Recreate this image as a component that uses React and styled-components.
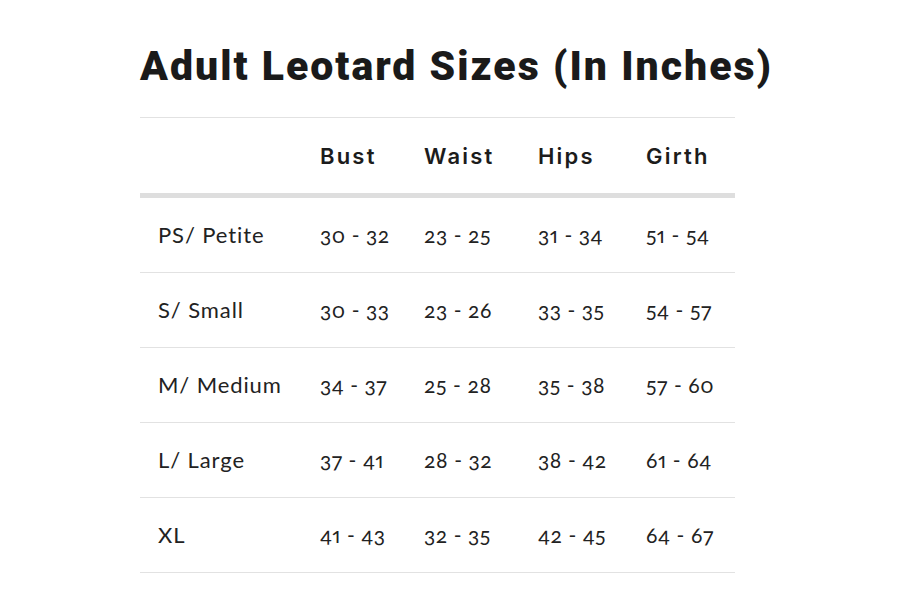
import React from 'react';
import styled, { createGlobalStyle } from 'styled-components';

const GlobalStyle = createGlobalStyle`
    body {
        margin: 0;
        background: #ffffff;
        color: #1c1c1c;
        font-family: Lato, "Open Sans", sans-serif;
    }
`;

const Page = styled.div`
    width: 898px;
    padding: 41px 0 0 140px;
    box-sizing: border-box;
`;

const Title = styled.h1`
    margin: 0 0 26px;
    font-family: Roboto, "Liberation Sans", sans-serif;
    font-size: 41px;
    font-weight: 900;
    line-height: 50px;
    letter-spacing: 2px;
    color: #1a1a1a;
`;

const Table = styled.table`
    width: 595px;
    table-layout: fixed;
    border-collapse: collapse;
    border-top: 1px solid #e2e2e2;
`;

const HeadCell = styled.th`
    width: ${p => p.$w - 18}px;
    height: 75px;
    padding: 0 0 0 18px;
    text-align: left;
    vertical-align: middle;
    font-family: Inter, "Open Sans", sans-serif;
    font-size: 22px;
    font-weight: 600;
    letter-spacing: 2.2px;
    color: #1c1c1c;
    border-bottom: 5px solid #dedede;
`;

const Row = styled.tr`
    border-bottom: 1px solid #e2e2e2;
`;

const Cell = styled.td`
    height: 72px;
    padding: 0 0 2px 18px;
    vertical-align: middle;
    font-family: Lato, "Open Sans", sans-serif;
    font-size: ${p => (p.$label ? '22px' : '21px')};
    letter-spacing: ${p => (p.$label ? '0.9px' : '0.6px')};
    color: #222222;
    font-variant-numeric: oldstyle-nums proportional-nums;
    white-space: nowrap;
`;

const widths = [162, 104, 114, 108, 107];
const headers = ['', 'Bust', 'Waist', 'Hips', 'Girth'];

const rows = [
    ['PS/ Petite', '30 - 32', '23 - 25', '31 - 34', '51 - 54'],
    ['S/ Small', '30 - 33', '23 - 26', '33 - 35', '54 - 57'],
    ['M/ Medium', '34 - 37', '25 - 28', '35 - 38', '57 - 60'],
    ['L/ Large', '37 - 41', '28 - 32', '38 - 42', '61 - 64'],
    ['XL', '41 - 43', '32 - 35', '42 - 45', '64 - 67'],
];

export default function App() {
    return (
        <Page>
            <GlobalStyle />
            <Title>Adult Leotard Sizes (In Inches)</Title>
            <Table>
                <thead>
                    <tr>
                        {headers.map((h, i) => (
                            <HeadCell key={i} $w={widths[i]}>{h}</HeadCell>
                        ))}
                    </tr>
                </thead>
                <tbody>
                    {rows.map(r => (
                        <Row key={r[0]}>
                            {r.map((c, i) => <Cell key={i} $label={i === 0}>{c}</Cell>)}
                        </Row>
                    ))}
                </tbody>
            </Table>
        </Page>
    );
}
